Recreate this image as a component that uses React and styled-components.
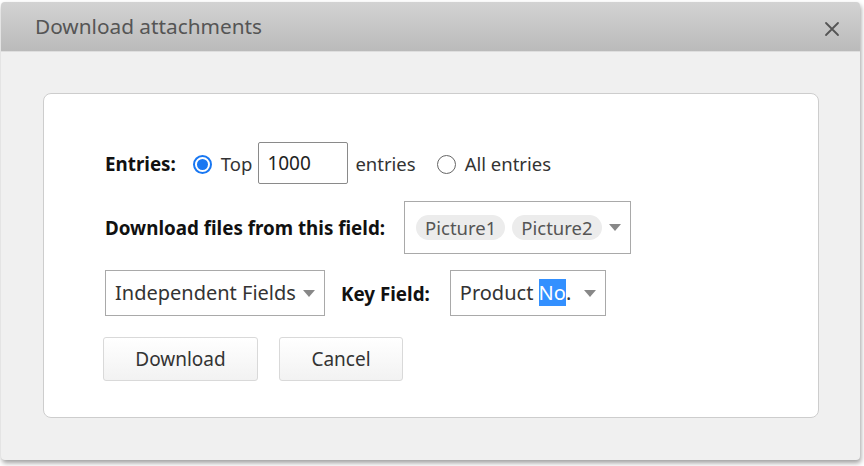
import React from "react";
import styled, { createGlobalStyle } from "styled-components";

const Global = createGlobalStyle`
  html, body { margin: 0; padding: 0; background: #ffffff; }
  body { font-family: "Noto Sans", "Open Sans", sans-serif; }
`;

const Page = styled.div`
  width: 864px;
  height: 466px;
  padding: 2px 0 0 1px;
  box-sizing: border-box;
  overflow: hidden;
`;

const Dialog = styled.div`
  width: 859px;
  height: 458px;
  border-radius: 4px;
  background: #f0f0f0;
  box-shadow: 1px 3px 5px rgba(0, 0, 0, 0.38);
  display: flex;
  flex-direction: column;
  overflow: hidden;
`;

const Header = styled.div`
  height: 49px;
  flex: none;
  display: flex;
  align-items: center;
  justify-content: space-between;
  padding: 0 20px 0 34px;
  background: linear-gradient(#d3d3d3, #bababa);
  border-bottom: 1px solid #dedede;
`;

const Title = styled.div`
  font-size: 20.8px;
  color: #555;
  margin-top: -1px;
`;

const CloseBtn = styled.button`
  border: none;
  background: none;
  padding: 0;
  width: 16px;
  height: 16px;
  display: flex;
  margin-top: 4px;
`;

const Body = styled.div`
  flex: 1;
  padding: 41px 41px 42px 42px;
  display: flex;
`;

const Card = styled.div`
  flex: 1;
  background: #fff;
  border: 1px solid #cdcdcd;
  border-radius: 8px;
  padding: 48px 0 0 61px;
  display: flex;
  flex-direction: column;
  gap: 17px;
`;

const Row = styled.div`
  display: flex;
  align-items: center;
  height: ${(p) => p.h}px;
`;

const Label = styled.span`
  font-weight: 700;
  font-size: 18.8px;
  color: #111;
  margin-right: ${(p) => p.mr}px;
  margin-left: ${(p) => p.ml || 0}px;
  margin-top: 2px;
`;

const Text = styled.span`
  font-size: 18.5px;
  color: #333;
  margin-right: ${(p) => p.mr || 0}px;
`;

const Radio = styled.span`
  width: 19px;
  height: 19px;
  box-sizing: border-box;
  border-radius: 50%;
  border: ${(p) => (p.checked ? "2px solid #1877f2" : "1.5px solid #666")};
  display: flex;
  align-items: center;
  justify-content: center;
  margin-right: 9px;
  margin-top: 2px;
  &::after {
    content: "";
    display: ${(p) => (p.checked ? "block" : "none")};
    width: 11px;
    height: 11px;
    border-radius: 50%;
    background: #1877f2;
  }
`;

const NumInput = styled.div`
  width: 90px;
  height: 42px;
  box-sizing: border-box;
  border: 1px solid #8a8a8a;
  border-radius: 2px;
  padding: 0 8px;
  display: flex;
  align-items: center;
  font-size: 19px;
  color: #222;
  margin: 0 7px 0 6px;
`;

const SelectBox = styled.div`
  width: ${(p) => p.w}px;
  height: ${(p) => p.h}px;
  box-sizing: border-box;
  border: 1px solid #a9a9a9;
  display: flex;
  align-items: center;
  padding: 0 9px 0 ${(p) => p.pl}px;
  gap: ${(p) => p.gap || 0}px;
  font-size: 20px;
  color: #333;
  background: #fff;
  white-space: nowrap;
`;

const Chip = styled.span`
  height: 25px;
  padding: 0 9px;
  border-radius: 13px;
  background: #ececec;
  color: #555;
  font-size: 18.5px;
  display: flex;
  align-items: center;
`;

const Caret = styled.span`
  margin-left: auto;
  flex: none;
  width: 0;
  height: 0;
  border-left: 6px solid transparent;
  border-right: 6px solid transparent;
  border-top: 7px solid #888;
  margin-top: 1px;
`;

const Highlight = styled.span`
  background: #3390ff;
  color: #fff;
`;

const Buttons = styled.div`
  display: flex;
  gap: 21px;
  margin-top: 5px;
  margin-left: -2px;
`;

const Button = styled.button`
  width: ${(p) => p.w}px;
  height: 44px;
  box-sizing: border-box;
  border: 1px solid #d9d9d9;
  border-radius: 3px;
  background: linear-gradient(#ffffff, #f2f2f2);
  font-family: "Noto Sans", sans-serif;
  font-size: 19px;
  color: #333;
  padding: 0;
`;

export default function App() {
  return (
    <Page>
      <Global />
      <Dialog>
        <Header>
          <Title>Download attachments</Title>
          <CloseBtn aria-label="close">
            <svg width="16" height="16" viewBox="0 0 16 16">
              <path d="M2 2L14 14M14 2L2 14" stroke="#555" strokeWidth="1.8" strokeLinecap="round" />
            </svg>
          </CloseBtn>
        </Header>
        <Body>
          <Card>
            <Row h={42}>
              <Label mr={17}>Entries:</Label>
              <Radio checked />
              <Text>Top</Text>
              <NumInput>1000</NumInput>
              <Text mr={21}>entries</Text>
              <Radio />
              <Text>All entries</Text>
            </Row>
            <Row h={52}>
              <Label mr={19}>Download files from this field:</Label>
              <SelectBox w={227} h={53} pl={11} gap={7}>
                <Chip>Picture1</Chip>
                <Chip>Picture2</Chip>
                <Caret />
              </SelectBox>
            </Row>
            <Row h={45}>
              <SelectBox w={220} h={46} pl={9}>
                Independent Fields
                <Caret />
              </SelectBox>
              <Label mr={20} ml={16}>Key Field:</Label>
              <SelectBox w={156} h={46} pl={9}>
                <span>
                  Product <Highlight>No</Highlight>.
                </span>
                <Caret />
              </SelectBox>
            </Row>
            <Buttons>
              <Button w={155}>Download</Button>
              <Button w={124}>Cancel</Button>
            </Buttons>
          </Card>
        </Body>
      </Dialog>
    </Page>
  );
}
